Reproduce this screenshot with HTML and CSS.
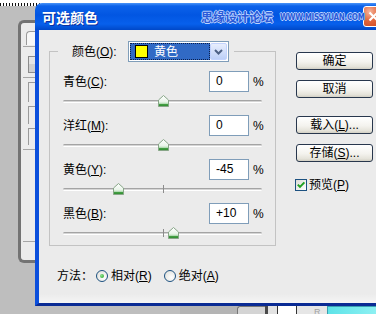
FILE: index.html
```html
<!DOCTYPE html>
<html>
<head>
  <meta charset="utf-8">
  <link rel="stylesheet" href="styles.css">
</head>
<body>
  <svg class="defs" width="0" height="0">
    <defs>
      <linearGradient id="thumb-fill" x1="0" y1="0" x2="0" y2="1">
        <stop offset="0" stop-color="#ffffff"/>
        <stop offset="0.55" stop-color="#eaf5ea"/>
        <stop offset="0.72" stop-color="#c3e4c3"/>
        <stop offset="0.78" stop-color="#45a045"/>
        <stop offset="1" stop-color="#2e8b2e"/>
      </linearGradient>
      <symbol id="thumb" viewBox="0 0 11 12">
        <path d="M5.5 0.5 L10.5 5 V11.5 H0.5 V5 Z" fill="url(#thumb-fill)" stroke="#88a688"/>
      </symbol>
    </defs>
  </svg>

  <div class="ruler"></div>

  <!-- window behind the dialog -->
  <div class="back-win">
    <div class="bw-tab"></div>
    <div class="bw-rule"></div>
    <div class="bw-spin"></div>
    <div class="bw-rule bw-rule-gap"></div>
    <div class="bw-box bw-box-1"></div>
    <div class="bw-box bw-box-2"></div>
    <div class="bw-box bw-box-3"></div>
    <div class="bw-rule bw-rule-gap"></div>
    <div class="bw-rule bw-rule-low"></div>
  </div>

  <div class="dialog">
    <div class="titlebar">
      <span class="title">可选颜色</span>
      <span class="watermark"><span class="wm-cn">思缘设计论坛</span><span class="wm-en">WWW.MISSYUAN.COM</span></span>
      <span class="close">
        <svg width="11" height="11" viewBox="0 0 11 11"><path d="M1.5 1.5 L9.5 9.5 M9.5 1.5 L1.5 9.5" stroke="#fff" stroke-width="2.2"/></svg>
      </span>
    </div>

    <div class="dialog-body">
      <div class="main">
        <fieldset class="group">
          <legend class="legend">
            <span class="legend-label">颜色(<u>O</u>):</span>
            <span class="select">
              <span class="select-value"><span class="swatch"></span>黄色</span>
              <span class="select-arrow">
                <svg width="9" height="6" viewBox="0 0 9 6"><path d="M1 1 L4.5 4.5 L8 1" fill="none" stroke="#4d6185" stroke-width="2"/></svg>
              </span>
            </span>
          </legend>

          <div class="row">
            <div class="row-head"><span class="label">青色(<u>C</u>):</span><span class="field">0</span><span class="pct">%</span></div>
            <div class="slider"><span class="track"></span><span class="tick"></span><svg class="thumb" style="--v: 0"><use href="#thumb"/></svg></div>
          </div>
          <div class="row">
            <div class="row-head"><span class="label">洋红(<u>M</u>):</span><span class="field">0</span><span class="pct">%</span></div>
            <div class="slider"><span class="track"></span><span class="tick"></span><svg class="thumb" style="--v: 0"><use href="#thumb"/></svg></div>
          </div>
          <div class="row">
            <div class="row-head"><span class="label">黄色(<u>Y</u>):</span><span class="field">-45</span><span class="pct">%</span></div>
            <div class="slider"><span class="track"></span><span class="tick"></span><svg class="thumb" style="--v: -45"><use href="#thumb"/></svg></div>
          </div>
          <div class="row">
            <div class="row-head"><span class="label">黑色(<u>B</u>):</span><span class="field">+10</span><span class="pct">%</span></div>
            <div class="slider"><span class="track"></span><span class="tick"></span><svg class="thumb" style="--v: 10"><use href="#thumb"/></svg></div>
          </div>
        </fieldset>

        <div class="side">
          <button class="btn">确定</button>
          <button class="btn btn-cancel">取消</button>
          <button class="btn">载入(<u>L</u>)...</button>
          <button class="btn btn-save">存储(<u>S</u>)...</button>
          <div class="check-row">
            <span class="checkbox">
              <svg width="10" height="10" viewBox="0 0 10 10"><path d="M1.8 4.6 L4 6.9 L8.4 2.4" fill="none" stroke="#21a121" stroke-width="2"/></svg>
            </span>
            <span>预览(<u>P</u>)</span>
          </div>
        </div>
      </div>

      <div class="method">
        <span>方法：</span>
        <span class="radio checked"></span><span>相对(<u>R</u>)</span>
        <span class="radio radio-2"></span><span>绝对(<u>A</u>)</span>
      </div>
    </div>
  </div>

  <div class="strip">
    <span class="strip-gap"></span>
    <span class="strip-a"></span>
    <span class="strip-b"></span>
    <span class="strip-c"></span>
    <span class="strip-d"></span>
    <span class="strip-e"></span>
    <span class="strip-f">R</span>
    <span class="strip-g"></span>
  </div>
</body>
</html>
```

FILE: styles.css
```css
* {
  box-sizing: border-box;
}
body {
  margin: 0;
  width: 376px;
  height: 314px;
  position: relative;
  overflow: hidden;
  background: #bebebe;
  font-family: "Liberation Sans", "Noto Sans CJK SC", sans-serif;
  font-size: 12px;
  line-height: 14px;
  color: #000;
}
.defs {
  position: absolute;
  width: 0;
  height: 0;
}
.ruler {
  height: 6px;
  background: repeating-linear-gradient(90deg, #111 0 1px, #fff 1px 3px) left bottom / 100% 3px no-repeat, #fff;
}

/* window behind */
.back-win {
  position: absolute;
  left: 18px;
  top: 20px;
  width: 40px;
  height: 243px;
  padding-left: 2px;
  border: 3px solid #737373;
  border-right: 0;
  border-radius: 6px 0 0 6px;
  background: #ececec;
}
.bw-tab {
  height: 14px;
  margin: 8px 0 0 3px;
  border: 1px solid #9a9a9a;
  border-right: 0;
  border-bottom: 0;
  border-radius: 4px 0 0 0;
  background: #f7f7f7;
}
.bw-rule {
  border-top: 1px solid #a6a6a6;
  margin-top: 1px;
}
.bw-rule-gap {
  margin-top: 4px;
}
.bw-rule-low {
  margin-top: 91px;
}
.bw-spin {
  width: 12px;
  height: 17px;
  margin: 9px 0 0 5px;
  border: 1px solid #8c8c8c;
  background: linear-gradient(#e4e4e4 50%, #cfcfcf 50%);
}
.bw-box {
  margin: 4px 0 0 5px;
  border-left: 1px solid #9a9a9a;
  border-top: 1px solid #9a9a9a;
}
.bw-box-1 { height: 20px; }
.bw-box-2 { height: 18px; }
.bw-box-3 { height: 17px; }

/* dialog */
.dialog {
  position: absolute;
  left: 35px;
  top: 3px;
  width: 352px;
}
.titlebar {
  height: 27px;
  display: flex;
  align-items: center;
  padding-left: 7px;
  white-space: nowrap;
  border-radius: 7px 7px 0 0;
  background: linear-gradient(#4a94f8, #0c62ea 3px, #0256e2 12px, #0760ec 21px, #0048c8);
}
.titlebar > span {
  flex-shrink: 0;
}
.title {
  width: 56px;
  color: #fff;
  font-family: "Noto Sans CJK SC", sans-serif;
  font-size: 14px;
  font-weight: bold;
  line-height: 16px;
  text-shadow: 1px 1px 0 #0b2f9e;
}
.watermark {
  margin-left: 103px;
  display: flex;
  align-items: center;
  color: #2a5ad8;
  text-shadow: -1px 0 #b9d2ff, 1px 0 #b9d2ff, 0 -1px #b9d2ff, 0 1px #b9d2ff;
}
.wm-cn {
  width: 72px;
  font-family: "Noto Sans CJK SC", sans-serif;
  font-size: 12px;
  font-weight: bold;
}
.wm-en {
  width: 82px;
  margin-left: 7px;
  font-family: "DejaVu Sans", sans-serif;
  font-size: 9px;
  font-weight: bold;
  letter-spacing: -0.4px;
  transform: scaleX(0.8);
  transform-origin: left center;
}
.close {
  margin-left: 1px;
  width: 21px;
  height: 21px;
  display: flex;
  align-items: center;
  justify-content: center;
  border: 1px solid #fff;
  border-radius: 3px;
  background: radial-gradient(circle at 30% 25%, #f6b59c, #e2683f 45%, #c8431c);
}
.dialog-body {
  height: 276px;
  padding: 11px 0 0 10px;
  background: linear-gradient(#ebebeb 264px, #f5f5f5);
  border-left: 4px solid #0b4fdc;
  border-bottom: 3px solid #0a2b94;
}
.main {
  display: flex;
  align-items: flex-start;
}

/* group box */
.group {
  width: 227px;
  min-width: 0;
  margin: 0;
  padding: 9px 11px 6px 13px;
  border: 1px solid #c3c3c3;
}
.legend {
  display: flex;
  align-items: center;
  height: 21px;
  margin-left: -5px;
  padding: 0 5px 0 14px;
}
.legend-label {
  width: 56px;
}
.select {
  display: flex;
  width: 101px;
  height: 21px;
  padding: 1px;
  border: 1px solid #7f9db9;
  background: #fff;
}
.select-value {
  flex: 1;
  display: flex;
  align-items: center;
  padding-left: 5px;
  color: #fff;
  background: #316ac5;
  outline: 1px dotted #0b1f4c;
  outline-offset: -1px;
}
.swatch {
  width: 13px;
  height: 13px;
  margin-right: 6px;
  border: 1px solid #000;
  background: #ffff00;
}
.select-arrow {
  width: 17px;
  display: flex;
  align-items: center;
  justify-content: center;
  border: 1px solid #c3d3fd;
  border-radius: 2px;
  background: linear-gradient(#e8eefd, #bdd0f8);
}
.row {
  margin-bottom: 8px;
}
.row:last-child {
  margin-bottom: 0;
}
.row-head {
  display: flex;
  align-items: center;
  height: 21px;
}
.label {
  flex: 1;
}
.field {
  width: 40px;
  height: 21px;
  padding-left: 6px;
  line-height: 19px;
  border: 1px solid #7f9db9;
  background: #fff;
}
.pct {
  width: 11px;
  margin-left: 4px;
}
.slider {
  position: relative;
  width: 199px;
  height: 12px;
  margin-top: 3px;
}
.track {
  position: absolute;
  left: 0;
  right: 0;
  top: 5px;
  height: 3px;
  border-radius: 2px;
  border-top: 1px solid #a4a4a4;
  border-bottom: 1px solid #fff;
  background: #d5d5d5;
}
.tick {
  position: absolute;
  left: 100px;
  top: 2px;
  width: 1px;
  height: 8px;
  background: #8c8c8c;
}
.thumb {
  position: absolute;
  top: 0;
  left: calc(95px + var(--v) * 1px);
  width: 11px;
  height: 12px;
}

/* buttons column */
.side {
  width: 77px;
  margin-left: 20px;
  padding-top: 11px;
  display: flex;
  flex-direction: column;
}
.btn {
  width: 77px;
  height: 18px;
  margin: 0 0 10px;
  padding: 0;
  font: inherit;
  line-height: 16px;
  color: #000;
  border: 1px solid #28374d;
  border-radius: 3px;
  background: linear-gradient(#fff, #f4f3ee 55%, #e5e3da 85%, #d3d0c4);
}
.btn-cancel {
  margin-bottom: 18px;
}
.btn-save {
  margin-bottom: 16px;
}
.check-row {
  display: flex;
  align-items: center;
  margin-left: -1px;
}
.checkbox {
  width: 12px;
  height: 12px;
  margin-right: 2px;
  display: flex;
  align-items: center;
  justify-content: center;
  border: 1px solid #1c5180;
  background: linear-gradient(135deg, #dcdcd6, #fff);
}

/* method row */
.method {
  display: flex;
  align-items: center;
  height: 14px;
  margin-top: 23px;
  padding-left: 8px;
}
.radio {
  position: relative;
  width: 12px;
  height: 12px;
  margin: 0 3px;
  border: 1px solid #1c5180;
  border-radius: 50%;
  background: radial-gradient(circle at 65% 65%, #fff, #dcdcd6);
}
.radio.checked::after {
  content: "";
  position: absolute;
  left: 3px;
  top: 3px;
  width: 4px;
  height: 4px;
  border-radius: 50%;
  background: radial-gradient(circle at 35% 35%, #8ee28e, #21a121);
}
.radio-2 {
  margin-left: 12px;
}

/* strip below dialog */
.strip {
  position: absolute;
  left: 0;
  top: 306px;
  width: 376px;
  height: 8px;
  display: flex;
  overflow: hidden;
}
.strip-gap { width: 180px; }
.strip-a { width: 57px; background: #b4b4b4; }
.strip-b {
  width: 28px;
  background: #d4d4d4;
  border-top: 1px solid #777;
  border-left: 1px solid #777;
  border-radius: 3px 0 0 0;
}
.strip-c { width: 3px; background: #4a4a4a; }
.strip-d { width: 9px; background: #e2e2e2; }
.strip-e {
  width: 20px;
  background: #fff;
  border-left: 1px solid #333;
  border-right: 1px solid #333;
}
.strip-f {
  width: 30px;
  padding: 1px 0 0 17px;
  font-size: 9px;
  line-height: 10px;
  color: #a3a3a3;
  background: #e6e6e6;
}
.strip-g {
  flex: 1;
  background: linear-gradient(90deg, #5de3e8, #8df0f2);
  border-top: 1px solid #3aa0b0;
  border-left: 1px solid #3aa0b0;
}
```
